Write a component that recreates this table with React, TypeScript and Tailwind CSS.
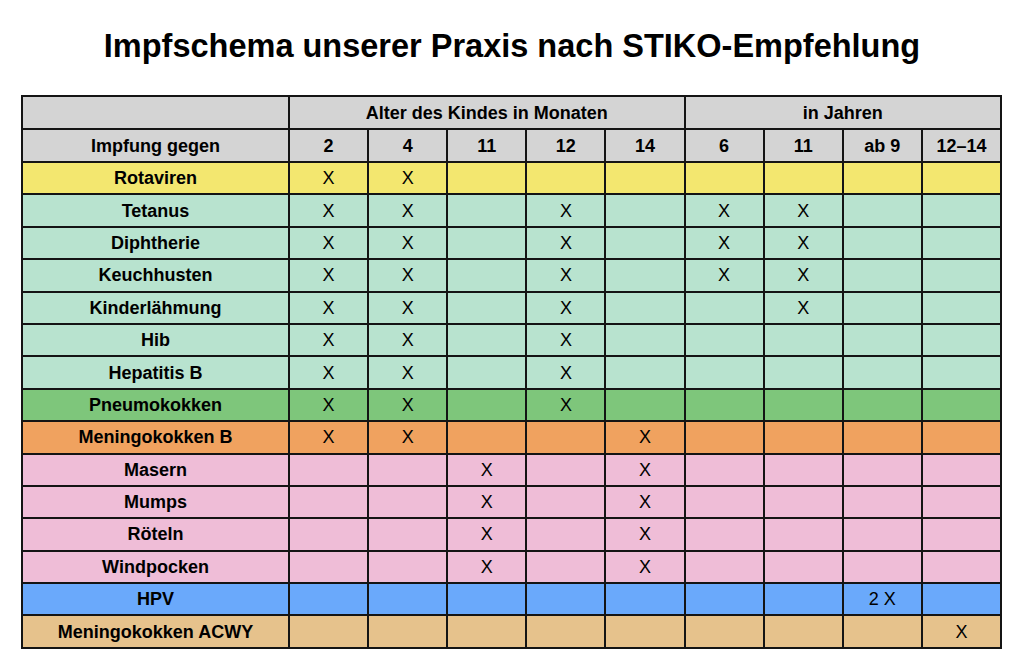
import React from "react";

type Row = {
  name: string;
  bg: string;
  marks: string[];
};

const months = ["2", "4", "11", "12", "14"];
const years = ["6", "11", "ab 9", "12–14"];

const rows: Row[] = [
  { name: "Rotaviren", bg: "bg-[#f3e76f]", marks: ["X", "X", "", "", "", "", "", "", ""] },
  { name: "Tetanus", bg: "bg-[#b8e3cf]", marks: ["X", "X", "", "X", "", "X", "X", "", ""] },
  { name: "Diphtherie", bg: "bg-[#b8e3cf]", marks: ["X", "X", "", "X", "", "X", "X", "", ""] },
  { name: "Keuchhusten", bg: "bg-[#b8e3cf]", marks: ["X", "X", "", "X", "", "X", "X", "", ""] },
  { name: "Kinderlähmung", bg: "bg-[#b8e3cf]", marks: ["X", "X", "", "X", "", "", "X", "", ""] },
  { name: "Hib", bg: "bg-[#b8e3cf]", marks: ["X", "X", "", "X", "", "", "", "", ""] },
  { name: "Hepatitis B", bg: "bg-[#b8e3cf]", marks: ["X", "X", "", "X", "", "", "", "", ""] },
  { name: "Pneumokokken", bg: "bg-[#7ec67b]", marks: ["X", "X", "", "X", "", "", "", "", ""] },
  { name: "Meningokokken B", bg: "bg-[#f0a25f]", marks: ["X", "X", "", "", "X", "", "", "", ""] },
  { name: "Masern", bg: "bg-[#efbdd7]", marks: ["", "", "X", "", "X", "", "", "", ""] },
  { name: "Mumps", bg: "bg-[#efbdd7]", marks: ["", "", "X", "", "X", "", "", "", ""] },
  { name: "Röteln", bg: "bg-[#efbdd7]", marks: ["", "", "X", "", "X", "", "", "", ""] },
  { name: "Windpocken", bg: "bg-[#efbdd7]", marks: ["", "", "X", "", "X", "", "", "", ""] },
  { name: "HPV", bg: "bg-[#6aa9fb]", marks: ["", "", "", "", "", "", "", "2 X", ""] },
  { name: "Meningokokken ACWY", bg: "bg-[#e6c28c]", marks: ["", "", "", "", "", "", "", "", "X"] },
];

const cell = "border-2 border-[#141414] text-center align-middle p-0";

export default function App() {
  return (
    <div className="w-[1024px] h-[669px] bg-white font-['Liberation_Sans',Arial,sans-serif] text-black">
      <h1 className="pt-[27px] text-center text-[32.5px] leading-[38px] font-bold">
        Impfschema unserer Praxis nach STIKO-Empfehlung
      </h1>
      <div className="pl-[21px] pt-[30px]">
        <table className="w-[981px] table-fixed border-collapse border-2 border-[#141414] text-[18px] leading-[20px]">
          <colgroup>
            <col className="w-[267px]" />
            {[...months, ...years].map((c, i) => (
              <col key={i} />
            ))}
          </colgroup>
          <thead>
            <tr className="bg-[#d4d4d4] h-[33px] font-bold">
              <td className={cell}></td>
              <td className={cell} colSpan={5}>
                Alter des Kindes in Monaten
              </td>
              <td className={cell} colSpan={4}>
                in Jahren
              </td>
            </tr>
            <tr className="bg-[#d4d4d4] h-[33px] font-bold">
              <td className={cell}>Impfung gegen</td>
              {[...months, ...years].map((c, i) => (
                <td key={i} className={cell}>
                  {c}
                </td>
              ))}
            </tr>
          </thead>
          <tbody>
            {rows.map((r) => (
              <tr key={r.name} className={`${r.bg} h-[32.4px]`}>
                <td className={`${cell} font-bold`}>{r.name}</td>
                {r.marks.map((m, i) => (
                  <td key={i} className={cell}>
                    {m}
                  </td>
                ))}
              </tr>
            ))}
          </tbody>
        </table>
      </div>
    </div>
  );
}
